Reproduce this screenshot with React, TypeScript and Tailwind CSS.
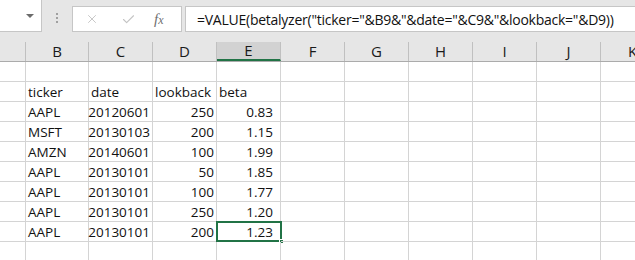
import { X, Check } from 'lucide-react'

const cols = ['', 'B', 'C', 'D', 'E', 'F', 'G', 'H', 'I', 'J', 'K']

type Cell = { v: string; right?: boolean; pr?: boolean }

const rows: Cell[][] = [
    [],
    [{ v: 'ticker' }, { v: 'date' }, { v: 'lookback' }, { v: 'beta' }],
    [{ v: 'AAPL' }, { v: '20120601', right: true }, { v: '250', right: true }, { v: '0.83', right: true, pr: true }],
    [{ v: 'MSFT' }, { v: '20130103', right: true }, { v: '200', right: true }, { v: '1.15', right: true, pr: true }],
    [{ v: 'AMZN' }, { v: '20140601', right: true }, { v: '100', right: true }, { v: '1.99', right: true, pr: true }],
    [{ v: 'AAPL' }, { v: '20130101', right: true }, { v: '50', right: true }, { v: '1.85', right: true, pr: true }],
    [{ v: 'AAPL' }, { v: '20130101', right: true }, { v: '100', right: true }, { v: '1.77', right: true, pr: true }],
    [{ v: 'AAPL' }, { v: '20130101', right: true }, { v: '250', right: true }, { v: '1.20', right: true, pr: true }],
    [{ v: 'AAPL' }, { v: '20130101', right: true }, { v: '200', right: true }, { v: '1.23', right: true, pr: true }],
    [],
]

const gridCols = 'grid grid-cols-[26px_63px_repeat(9,64px)]'

export default function App() {
    return (
        <div className="w-[635px] h-[260px] overflow-hidden bg-white font-['Open_Sans',sans-serif] text-[#111]">
            {/* Formula bar */}
            <div className="h-[42px] bg-[#e6e6e6] flex items-start">
                <div className="shrink-0 w-[42px] h-[32px] bg-white border-r border-b border-[#c6c6c6] flex items-center justify-end pr-[7px]">
                    <div className="w-0 h-0 border-l-[4px] border-r-[4px] border-t-[4px] border-l-transparent border-r-transparent border-t-[#6b6b6b]" />
                </div>
                <div className="shrink-0 w-[30px] h-[32px] flex flex-col items-center justify-center gap-[2px] pt-[4px]">
                    <div className="w-[2px] h-[2px] bg-[#a0a0a0]" />
                    <div className="w-[2px] h-[2px] bg-[#a0a0a0]" />
                    <div className="w-[2px] h-[2px] bg-[#a0a0a0]" />
                </div>
                <div className="shrink-0 mt-[6px] w-[110px] h-[26px] bg-white border border-[#c6c6c6] flex items-center">
                    <X className="ml-[12px] w-[14px] h-[14px] text-[#c4c4c4]" strokeWidth={1.6} />
                    <Check className="ml-[22px] w-[15px] h-[15px] text-[#c4c4c4]" strokeWidth={1.8} />
                    <span className="ml-[18px] font-['Liberation_Serif',serif] italic text-[15px] text-[#707070] leading-none">
                        f<span className="text-[12px]">x</span>
                    </span>
                </div>
                <div className="mt-[6px] ml-[3px] flex-1 min-w-0 h-[26px] bg-white border-l border-t border-b border-[#c6c6c6] flex items-center pl-[11px] text-[14px] tracking-[-0.25px] text-[#111] whitespace-nowrap overflow-hidden">
                    =VALUE(betalyzer("ticker="&amp;B9&amp;"&amp;date="&amp;C9&amp;"&amp;lookback="&amp;D9))
                </div>
            </div>

            {/* Column headers */}
            <div className={`${gridCols} h-[20px] bg-[#e6e6e6] border-b border-[#ababab]`}>
                {cols.map((c) => (
                    <div
                        key={c || 'A'}
                        className={`border-r border-[#c0c0c0] flex items-center justify-center text-[15px] leading-none text-[#1a1a1a] ${c === 'E' ? 'bg-[#d2d2d2] border-b-2 border-b-[#217346]' : ''}`}
                    >
                        {c}
                    </div>
                ))}
            </div>

            {/* Sheet body */}
            {rows.map((row, r) => (
                <div key={r} className={`${gridCols} h-[20px]`}>
                    {cols.map((c, ci) => {
                        const cell = ci >= 1 && ci <= 4 ? row[ci - 1] : undefined
                        const selected = r === 8 && c === 'E'
                        return (
                            <div
                                key={c || 'A'}
                                className={`relative border-r border-b border-[#d4d4d4] flex items-end pb-[1px] text-[13.5px] leading-[16px] whitespace-nowrap ${cell?.right ? 'justify-end' : 'justify-start'} ${cell?.pr ? 'pr-[7px]' : cell?.right ? 'pr-[2px]' : 'pl-[2px]'}`}
                            >
                                {cell?.v}
                                {selected && (
                                    <div className="absolute -left-[1px] -top-[1px] w-[66px] h-[21px] border-2 border-[#217346]">
                                        <div className="absolute -right-[4px] -bottom-[4px] w-[5px] h-[5px] bg-[#217346] border border-white" />
                                    </div>
                                )}
                            </div>
                        )
                    })}
                </div>
            ))}
        </div>
    )
}
